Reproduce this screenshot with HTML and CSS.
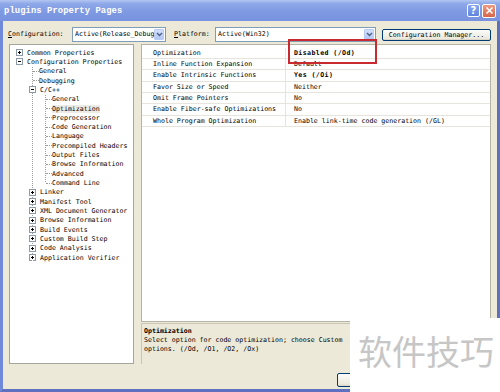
FILE: index.html
```html
<!DOCTYPE html>
<html>
<head>
<meta charset="utf-8">
<link rel="stylesheet" href="styles.css">
</head>
<body>
<div class="window">
  <div class="titlebar">
    <span class="title">plugins Property Pages</span>
    <div class="tbtns">
      <span class="tbtn help">?</span>
      <span class="tbtn close"><svg width="9" height="9" viewBox="0 0 9 9"><path d="M1.5 1.5L7.5 7.5M7.5 1.5L1.5 7.5" stroke="#fff" stroke-width="1.6"/></svg></span>
    </div>
  </div>
  <div class="client">
    <div class="toolbar">
      <span class="lbl cfg-lbl"><u>C</u>onfiguration:</span>
      <div class="combo cfg-combo"><span class="combo-text">Active(Release_Debug</span><span class="drop"><svg width="7" height="5" viewBox="0 0 7 5"><path d="M1 1L3.5 3.5L6 1" stroke="#4d6185" stroke-width="1.4" fill="none"/></svg></span></div>
      <span class="lbl plat-lbl"><u>P</u>latform:</span>
      <div class="combo plat-combo"><span class="combo-text">Active(Win32)</span><span class="drop"><svg width="7" height="5" viewBox="0 0 7 5"><path d="M1 1L3.5 3.5L6 1" stroke="#4d6185" stroke-width="1.4" fill="none"/></svg></span></div>
      <button class="btn cm-btn">Configuration Manager...</button>
    </div>
    <div class="main">
      <div class="tree">
        <div class="row l0"><svg class="box" width="7" height="7" viewBox="0 0 7 7"><rect x="0.5" y="0.5" width="6" height="6" fill="#fff" stroke="#8c9aa8"/><path d="M2 3.5h3M3.5 2v3" stroke="#000"/></svg><span>Common Properties</span></div>
        <div class="row l0"><svg class="box" width="7" height="7" viewBox="0 0 7 7"><rect x="0.5" y="0.5" width="6" height="6" fill="#fff" stroke="#8c9aa8"/><path d="M2 3.5h3" stroke="#000"/></svg><span>Configuration Properties</span></div>
        <div class="kids kids1">
          <div class="row leaf"><span class="hline"></span><span>General</span></div>
          <div class="row leaf"><span class="hline"></span><span>Debugging</span></div>
          <div class="row node"><svg class="box" width="7" height="7" viewBox="0 0 7 7"><rect x="0.5" y="0.5" width="6" height="6" fill="#fff" stroke="#8c9aa8"/><path d="M2 3.5h3" stroke="#000"/></svg><span>C/C++</span></div>
          <div class="kids kids2">
            <div class="row leaf"><span class="hline"></span><span>General</span></div>
            <div class="row leaf"><span class="hline"></span><span class="sel">Optimization</span></div>
            <div class="row leaf"><span class="hline"></span><span>Preprocessor</span></div>
            <div class="row leaf"><span class="hline"></span><span>Code Generation</span></div>
            <div class="row leaf"><span class="hline"></span><span>Language</span></div>
            <div class="row leaf"><span class="hline"></span><span>Precompiled Headers</span></div>
            <div class="row leaf"><span class="hline"></span><span>Output Files</span></div>
            <div class="row leaf"><span class="hline"></span><span>Browse Information</span></div>
            <div class="row leaf"><span class="hline"></span><span>Advanced</span></div>
            <div class="row leaf last"><span class="hline"></span><span>Command Line</span></div>
          </div>
          <div class="row node"><svg class="box" width="7" height="7" viewBox="0 0 7 7"><rect x="0.5" y="0.5" width="6" height="6" fill="#fff" stroke="#8c9aa8"/><path d="M2 3.5h3M3.5 2v3" stroke="#000"/></svg><span>Linker</span></div>
          <div class="row node"><svg class="box" width="7" height="7" viewBox="0 0 7 7"><rect x="0.5" y="0.5" width="6" height="6" fill="#fff" stroke="#8c9aa8"/><path d="M2 3.5h3M3.5 2v3" stroke="#000"/></svg><span>Manifest Tool</span></div>
          <div class="row node"><svg class="box" width="7" height="7" viewBox="0 0 7 7"><rect x="0.5" y="0.5" width="6" height="6" fill="#fff" stroke="#8c9aa8"/><path d="M2 3.5h3M3.5 2v3" stroke="#000"/></svg><span>XML Document Generator</span></div>
          <div class="row node"><svg class="box" width="7" height="7" viewBox="0 0 7 7"><rect x="0.5" y="0.5" width="6" height="6" fill="#fff" stroke="#8c9aa8"/><path d="M2 3.5h3M3.5 2v3" stroke="#000"/></svg><span>Browse Information</span></div>
          <div class="row node"><svg class="box" width="7" height="7" viewBox="0 0 7 7"><rect x="0.5" y="0.5" width="6" height="6" fill="#fff" stroke="#8c9aa8"/><path d="M2 3.5h3M3.5 2v3" stroke="#000"/></svg><span>Build Events</span></div>
          <div class="row node"><svg class="box" width="7" height="7" viewBox="0 0 7 7"><rect x="0.5" y="0.5" width="6" height="6" fill="#fff" stroke="#8c9aa8"/><path d="M2 3.5h3M3.5 2v3" stroke="#000"/></svg><span>Custom Build Step</span></div>
          <div class="row node"><svg class="box" width="7" height="7" viewBox="0 0 7 7"><rect x="0.5" y="0.5" width="6" height="6" fill="#fff" stroke="#8c9aa8"/><path d="M2 3.5h3M3.5 2v3" stroke="#000"/></svg><span>Code Analysis</span></div>
          <div class="row node last"><svg class="box" width="7" height="7" viewBox="0 0 7 7"><rect x="0.5" y="0.5" width="6" height="6" fill="#fff" stroke="#8c9aa8"/><path d="M2 3.5h3M3.5 2v3" stroke="#000"/></svg><span>Application Verifier</span></div>
        </div>
      </div>
      <div class="right">
        <div class="grid">
          <div class="prow"><span class="pname">Optimization</span><span class="pval b">Disabled (/Od)</span></div>
          <div class="prow"><span class="pname">Inline Function Expansion</span><span class="pval">Default</span></div>
          <div class="prow"><span class="pname">Enable Intrinsic Functions</span><span class="pval b">Yes (/Oi)</span></div>
          <div class="prow"><span class="pname">Favor Size or Speed</span><span class="pval">Neither</span></div>
          <div class="prow"><span class="pname">Omit Frame Pointers</span><span class="pval">No</span></div>
          <div class="prow"><span class="pname">Enable Fiber-safe Optimizations</span><span class="pval">No</span></div>
          <div class="prow"><span class="pname">Whole Program Optimization</span><span class="pval">Enable link-time code generation (/GL)</span></div>
        </div>
        <div class="desc">
          <div class="desc-title">Optimization</div>
          <div class="desc-text">Select option for code optimization; choose Custom</div>
          <div class="desc-text">options.     (/Od, /O1, /O2, /Ox)</div>
        </div>
      </div>
    </div>
    <div class="footer">
      <button class="btn ok-btn">OK</button>
    </div>
  </div>
  <div class="redbox"></div>
  <div class="watermark">软件技巧</div>
</div>
</body>
</html>
```

FILE: styles.css
```css
* { box-sizing: border-box; }
html, body { margin: 0; padding: 0; }
body {
  width: 500px;
  height: 392px;
  overflow: hidden;
  background: #fff;
  font-family: "DejaVu Sans Mono", "Liberation Mono", monospace;
  font-size: 6.6px;
  color: #000;
}
.window {
  position: relative;
  width: 500px;
  height: 392px;
  display: flex;
  flex-direction: column;
  background: #ece9d8;
  border-left: 3px solid #7189d9;
  border-right: 3px solid #5f6fb8;
  border-bottom: 3px solid #5f70c0;
}
.titlebar {
  height: 21px;
  margin: 0 -3px;
  display: flex;
  align-items: center;
  justify-content: space-between;
  padding: 0 4px 0 4px;
  background: linear-gradient(to bottom, #b3c6f2 0%, #8ea8e8 18%, #7f9ae2 55%, #7892df 100%);
}
.title {
  font-family: "Liberation Mono", monospace;
  font-weight: bold;
  font-size: 8.8px;
  color: #fff;
  letter-spacing: 0.1px;
}
.tbtns { display: flex; gap: 2px; }
.tbtn {
  width: 13px;
  height: 13px;
  border: 1px solid #fff;
  border-radius: 2px;
  display: flex;
  align-items: center;
  justify-content: center;
  color: #fff;
  font-family: "DejaVu Sans", sans-serif;
  font-weight: bold;
  font-size: 10px;
}
.help { background: linear-gradient(#8aa8ee, #5f82de); }
.close { background: linear-gradient(#ec9a80, #d6654a); width: 14px; height: 14px; }
.client {
  flex: 1;
  display: flex;
  flex-direction: column;
}
.toolbar {
  height: 21px;
  padding-top: 5px;
  padding-left: 5px;
  display: flex;
  align-items: center;
}
.lbl { white-space: nowrap; }
.cfg-lbl { width: 64px; }
.plat-lbl { width: 41px; margin-left: 8px; }
.combo {
  height: 15px;
  border: 1px solid #7f9db9;
  background: #fff;
  display: flex;
  align-items: center;
  justify-content: space-between;
  padding: 1px 1px 1px 2px;
}
.cfg-combo { width: 94px; }
.plat-combo { width: 161px; }
.combo-text { white-space: nowrap; overflow: hidden; }
.drop {
  width: 10px;
  height: 100%;
  background: linear-gradient(#d3e0fb, #b3c7f5);
  border: 1px solid #b9cbf3;
  border-radius: 1px;
  display: flex;
  align-items: center;
  justify-content: center;
  flex: none;
}
.btn {
  font: inherit;
  color: #000;
  border: 1px solid #003c74;
  border-radius: 2px;
  background: linear-gradient(#fcfcfb, #ece9dc 85%, #d6d0c0);
  padding: 0;
}
.cm-btn { width: 109px; height: 12px; margin-left: 6px; margin-top: 2px; line-height: 10px; }
.main {
  height: 320px;
  margin-top: 2px;
  display: flex;
}
.tree {
  width: 125px;
  margin-left: 6px;
  background: #fff;
  border: 1px solid #a6a59b;
  padding-top: 3px;
}
.row {
  height: 9.32px;
  display: flex;
  align-items: center;
  white-space: nowrap;
  position: relative;
}
.l0 { padding-left: 6px; }
.box { flex: none; margin-right: 4px; }
.kids { border-left: 1px dotted #9c9c9c; }
.kids1 { margin-left: 22px; }
.kids2 { margin-left: 12px; }
.hline {
  width: 6px;
  border-top: 1px dotted #9c9c9c;
  flex: none;
}
.node .box { margin-left: -4px; margin-right: 4px; }
.row.last::before {
  content: "";
  position: absolute;
  left: -1px;
  top: 5px;
  width: 1px;
  height: 5px;
  background: #fff;
}
.node.last::before { left: -1px; top: 7px; height: 3px; }
.sel { background: #ecebe6; }
.right {
  width: 350px;
  margin-left: 7px;
  display: flex;
  flex-direction: column;
}
.grid {
  height: 278px;
  background: #fff;
  border: 1px solid #b5b2a6;
  padding-top: 2.6px;
}
.prow {
  height: 11.33px;
  display: flex;
  align-items: center;
  border-bottom: 1px solid #e6e4dc;
  white-space: nowrap;
}
.pname {
  width: 144px;
  height: 100%;
  display: flex;
  align-items: center;
  padding-left: 11px;
  border-right: 1px solid #e6e4dc;
}
.pval { padding-left: 8px; }
.b { font-weight: bold; letter-spacing: 0.4px; }
.desc {
  margin-top: 1px;
  height: 41px;
  border: 1px solid #c9c6b8;
  border-bottom: none;
  border-right: none;
  padding: 3px 2px;
  white-space: nowrap;
}
.desc-title { font-weight: bold; line-height: 9px; }
.desc-text {
  line-height: 8.6px;
  margin-top: 0.3px;
}
.footer {
  flex: 1;
  padding-top: 9px;
  padding-left: 334px;
}
.ok-btn { width: 50px; height: 14px; }
.redbox {
  position: absolute;
  left: 285px;
  top: 39px;
  width: 89px;
  height: 25px;
  border: 2.5px solid #c92a2f;
}
.watermark {
  position: absolute;
  left: 347px;
  top: 318px;
  width: 153px;
  height: 77px;
  background: #fff;
  padding: 16px 0 0 8px;
  font-family: "Noto Sans CJK SC", sans-serif;
  font-size: 34px;
  line-height: 34px;
  color: #c6c6c6;
  white-space: nowrap;
}
```
